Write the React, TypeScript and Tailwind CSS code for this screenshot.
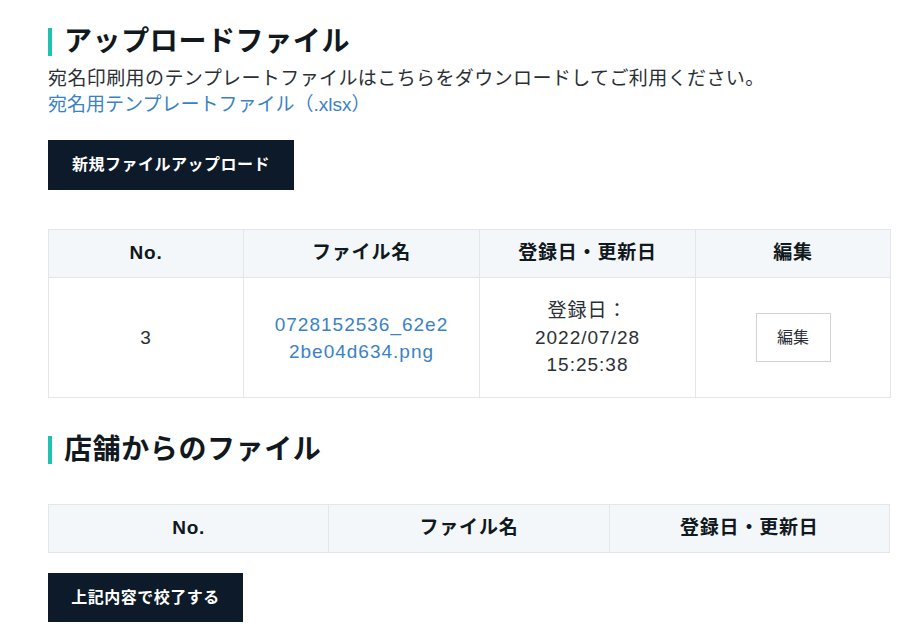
const font = {
  fontFamily: '"Liberation Sans", "Noto Sans CJK JP", sans-serif',
};

type HeadingProps = { children: React.ReactNode };

const SectionHeading = ({ children }: HeadingProps) => (
  <h2 className="flex items-center gap-3 text-[28px] font-bold leading-[40px] tracking-[0.6px] text-[#101820]">
    <span className="h-[28px] w-[4px] bg-[#1fc2b2]" aria-hidden="true" />
    {children}
  </h2>
);

const th =
  "h-[48px] border border-[#e3e7eb] bg-[#f4f7f9] text-center text-[19px] font-bold tracking-[0.8px] text-[#101820]";
const td =
  "border border-[#e3e7eb] px-[26px] text-center text-[19px] leading-[27px] tracking-[1px] text-[#2a2f35]";

export default function App() {
  return (
    <div className="min-h-[640px] bg-white pl-[48px] pr-[30px] pt-[22px]" style={font}>
      <SectionHeading>アップロードファイル</SectionHeading>
      <p className="mt-[4px] text-[19px] leading-[26px] tracking-[0.4px] text-[#2a2f35]">
        宛名印刷用のテンプレートファイルはこちらをダウンロードしてご利用ください。
      </p>
      <a href="#" className="block text-[19px] leading-[26px] text-[#3a82c4]">
        宛名用テンプレートファイル（.xlsx）
      </a>

      <button
        type="button"
        className="mt-[22px] h-[50px] w-[246px] bg-[#0c1a2a] text-[16px] font-bold tracking-[0.5px] text-white"
      >
        新規ファイルアップロード
      </button>

      <table className="mt-[39px] w-[842px] table-fixed border-collapse">
        <thead>
          <tr>
            <th className={`${th} w-[195px]`}>No.</th>
            <th className={`${th} w-[236px]`}>ファイル名</th>
            <th className={`${th} w-[216px]`}>登録日・更新日</th>
            <th className={`${th} w-[195px]`}>編集</th>
          </tr>
        </thead>
        <tbody>
          <tr className="h-[120px]">
            <td className={td}>3</td>
            <td className={`${td} break-all`}>
              <a href="#" className="text-[#3a82c4]">
                0728152536_62e22be04d634.png
              </a>
            </td>
            <td className={td}>
              登録日：
              <br />
              2022/07/28
              <br />
              15:25:38
            </td>
            <td className={td}>
              <button
                type="button"
                className="h-[49px] w-[75px] border border-[#cfd3d7] bg-white text-[16px] tracking-normal text-[#2a2f35]"
              >
                編集
              </button>
            </td>
          </tr>
        </tbody>
      </table>

      <div className="mt-[32px]">
        <SectionHeading>店舗からのファイル</SectionHeading>
      </div>

      <table className="mt-[34px] w-[842px] table-fixed border-collapse">
        <thead>
          <tr>
            <th className={th}>No.</th>
            <th className={th}>ファイル名</th>
            <th className={th}>登録日・更新日</th>
          </tr>
        </thead>
      </table>

      <button
        type="button"
        className="mt-[20px] h-[49px] w-[195px] bg-[#0c1a2a] text-[16px] font-bold tracking-[0.5px] text-white"
      >
        上記内容で校了する
      </button>
    </div>
  );
}
